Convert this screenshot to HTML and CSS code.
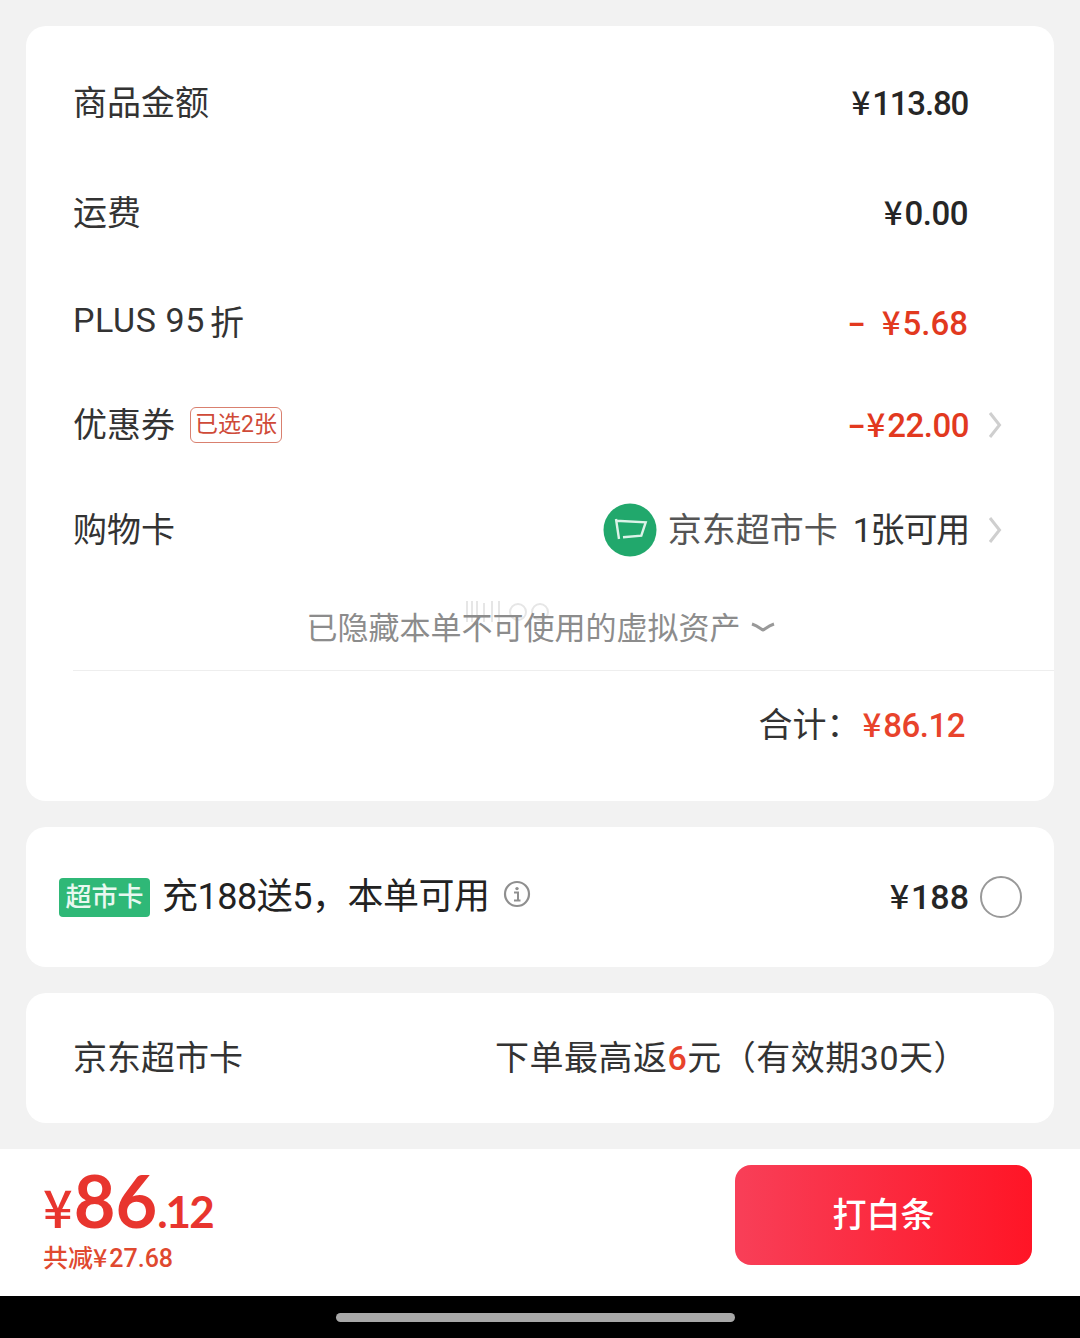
FILE: index.html
```html
<!DOCTYPE html>
<html>
<head>
<meta http-equiv="Content-Type" content="text/html; charset=utf-8"/>
<title>结算</title>
<link rel="stylesheet" href="styles.css">
</head>
<body>
<div class="content">
  <div class="card summary">
    <div class="row">
      <span class="label">商品金额</span>
      <span class="amount tight"><span class="yen">¥</span>113.80</span>
    </div>
    <div class="row">
      <span class="label">运费</span>
      <span class="amount"><span class="yen">¥</span>0.00</span>
    </div>
    <div class="row">
      <span class="label"><span class="latin">PLUS 95</span>折</span>
      <span class="amount red wide"><span class="minus minus-gap">-</span><span class="yen">¥</span>5.68</span>
    </div>
    <div class="row row-link row-coupon">
      <span class="label">优惠券<span class="tag">已选2张</span></span>
      <span class="amount red"><span class="minus">-</span><span class="yen">¥</span>22.00</span>
      <svg class="chev" width="14" height="26" viewBox="0 0 14 26"><path d="M2 1 L11.5 13 L2 25" fill="none" stroke="#cfcfcf" stroke-width="3"/></svg>
    </div>
    <div class="row row-link row-shop">
      <span class="label">购物卡</span>
      <span class="shopcard">
        <svg class="shopicon" width="54" height="54" viewBox="0 0 54 54"><circle cx="27" cy="27" r="26.5" fill="#21a86c"/><path d="M13 16 L16 36 M13 17.7 L42.7 19.3 L38.3 32.7 L20 34.3" fill="none" stroke="#dcf3e8" stroke-width="2.4"/></svg>
        <span class="shopname">京东超市卡</span>
        <span class="shopcount">1张可用</span>
      </span>
      <svg class="chev" width="14" height="26" viewBox="0 0 14 26"><path d="M2 1 L11.5 13 L2 25" fill="none" stroke="#cfcfcf" stroke-width="3"/></svg>
    </div>
    <div class="hidden-line">
      <svg class="smudge" width="90" height="26" viewBox="0 0 90 26"><path d="M3 3 V24 M8 3 V24 M13 3 V24 M20 5 V24 M28 3 V24 M35 3 V24" fill="none" stroke="#e6e6e6" stroke-width="2"/><circle cx="54" cy="14" r="8" fill="none" stroke="#e6e6e6" stroke-width="2"/><circle cx="76" cy="14" r="8" fill="none" stroke="#e6e6e6" stroke-width="2"/></svg>
      <span class="hidden-text">已隐藏本单不可使用的虚拟资产</span>
      <svg class="down" width="24" height="12" viewBox="0 0 24 12"><path d="M1 3 C7 5 10 8 12 9 C14 8 17 5 23 3" fill="none" stroke="#999" stroke-width="3"/></svg>
    </div>
    <div class="total">
      <span class="total-label">合计：</span><span class="total-num"><span class="yen">¥</span>86.12</span>
    </div>
  </div>

  <div class="card recharge">
    <span class="green-tag">超市卡</span>
    <span class="recharge-text">充188送5，本单可用</span>
    <svg class="info" width="28" height="28" viewBox="0 0 28 28"><circle cx="14" cy="14" r="12" fill="none" stroke="#8f8f8f" stroke-width="2.2"/><circle cx="14" cy="8.6" r="1.7" fill="#8f8f8f"/><path d="M11 12.5 H15 V20 M11 20.5 H17.5" fill="none" stroke="#8f8f8f" stroke-width="2"/></svg>
    <span class="recharge-price"><span class="yen">¥</span>188</span>
    <span class="radio"></span>
  </div>

  <div class="card jdcard">
    <span class="label">京东超市卡</span>
    <span class="jdcard-note">下单最高返<b>6</b>元（有效期30天）</span>
  </div>
</div>

<div class="paybar">
  <div class="pay-left">
    <div class="pay-total"><span class="pay-yen">¥</span><span class="pay-int">86</span><span class="pay-dec">.12</span></div>
    <div class="pay-save">共减<span class="yen">¥</span>27.68</div>
  </div>
  <div class="pay-btn">打白条</div>
</div>

<div class="navbar"><span class="home-pill"></span></div>
</body>
</html>
```

FILE: styles.css
```css
* {
  box-sizing: border-box;
}

html, body {
  margin: 0;
  padding: 0;
}

body {
  width: 1080px;
  height: 1338px;
  overflow: hidden;
  background-color: #f2f2f2;
  font-family: "Roboto", "Noto Sans CJK SC", sans-serif;
  color: #262626;
  display: flex;
  flex-direction: column;
}

.content {
  height: 1149px;
  flex: none;
  padding: 26px 26px 0;
  display: flex;
  flex-direction: column;
  gap: 26px;
}

.card {
  background-color: #fff;
  border-radius: 20px;
  flex: none;
}

.summary {
  height: 775px;
  padding: 22px 0 0 47px;
  display: flex;
  flex-direction: column;
}

.row {
  height: 110px;
  flex: none;
  display: flex;
  align-items: center;
  justify-content: space-between;
  padding-right: 86px;
}

.row-link {
  justify-content: flex-start;
  padding-right: 52px;
}

.row-link .label {
  margin-right: auto;
}

.row-coupon {
  height: 94px;
}

.row-shop {
  height: 116px;
}

.label {
  font-size: 34px;
  color: #333;
  display: flex;
  align-items: center;
  margin-bottom: 6px;
}

.latin {
  letter-spacing: 0.6px;
  margin-right: 5px;
}

.amount {
  font-size: 33px;
  font-weight: 500;
  letter-spacing: -0.5px;
  margin-bottom: 4px;
}

.tight {
  letter-spacing: -1.2px;
}

.wide {
  letter-spacing: 0;
}

.yen {
  font-family: "Noto Sans CJK SC", sans-serif;
  letter-spacing: 0;
  margin-right: 2px;
}

.red {
  color: #e2391f;
}

.minus {
  display: inline-block;
  transform: scaleX(1.6);
  margin-right: 5px;
}

.minus-gap {
  margin-right: 20px;
}

.tag {
  margin: 6px 0 0 15px;
  height: 36px;
  padding: 0 4px;
  border: 1px solid #d9806f;
  border-radius: 6px;
  color: #cf4a38;
  font-size: 23px;
  line-height: 33px;
}

.chev {
  margin-left: 19px;
}

.shopcard {
  display: flex;
  align-items: center;
  font-size: 34px;
}

.shopicon {
  margin-right: 11px;
}

.shopname {
  color: #555;
  margin-right: 15px;
  margin-bottom: 6px;
}

.shopcount {
  color: #333;
  letter-spacing: -1.2px;
  margin-bottom: 6px;
}

.hidden-line {
  position: relative;
  height: 82px;
  flex: none;
  padding: 0 46px 4px 0;
  display: flex;
  align-items: center;
  justify-content: center;
  font-size: 31px;
  color: #8c8c8c;
}

.hidden-text {
  position: relative;
  margin-bottom: 4px;
}

.smudge {
  position: absolute;
  left: 391px;
  top: 10px;
}

.down {
  margin-left: 10px;
}

.total {
  border-top: 1px solid #eee;
  flex: 1;
  padding: 0 89px 22px 0;
  display: flex;
  align-items: center;
  justify-content: flex-end;
}

.total-label {
  font-size: 34px;
  color: #333;
  margin-right: 2px;
  margin-bottom: 6px;
}

.total-num {
  font-size: 33px;
  font-weight: 500;
  letter-spacing: -0.5px;
  color: #e8432c;
  margin-bottom: 4px;
}

.recharge {
  height: 140px;
  padding: 0 32px 0 33px;
  display: flex;
  align-items: center;
}

.green-tag {
  width: 91px;
  height: 39px;
  border-radius: 4px;
  background-color: #2fb877;
  color: #e8f8f0;
  font-size: 26px;
  font-weight: 500;
  line-height: 38px;
  text-align: center;
  margin-right: 12px;
}

.recharge-text {
  font-size: 36px;
  color: #222;
  letter-spacing: -0.5px;
  margin-right: 14px;
  margin-bottom: 8px;
  white-space: nowrap;
}

.info {
  margin-bottom: 6px;
}

.recharge-price {
  margin-left: auto;
  margin-right: 11px;
  font-size: 34px;
  font-weight: 500;
  margin-bottom: 6px;
}

.radio {
  width: 42px;
  height: 42px;
  border: 2px solid #999;
  border-radius: 50%;
}

.jdcard {
  height: 130px;
  padding: 0 0 0 47px;
  display: flex;
  align-items: center;
}

.jdcard-note {
  margin-left: 252px;
  font-size: 34px;
  letter-spacing: 0.5px;
  color: #333;
  margin-bottom: 6px;
}

.jdcard-note b {
  color: #e8432c;
  font-weight: 500;
}

.paybar {
  height: 147px;
  flex: none;
  background-color: #fff;
  padding: 16px 48px 0 43px;
  display: flex;
  justify-content: space-between;
  align-items: flex-start;
}

.pay-total {
  color: #e8352e;
  height: 60px;
  line-height: 60px;
  margin-top: 5px;
  display: flex;
  align-items: baseline;
  font-family: "Lato", "Roboto", sans-serif;
  font-weight: 700;
}

.pay-yen {
  font-family: "Noto Sans CJK SC", sans-serif;
  font-size: 52px;
  font-weight: 500;
  margin-right: 1px;
}

.pay-int {
  font-size: 72px;
}

.pay-dec {
  font-size: 44px;
  letter-spacing: -2px;
}

.pay-save {
  margin-top: 8px;
  color: #e0492f;
  font-size: 25px;
  font-weight: 500;
  line-height: 36px;
  white-space: nowrap;
}

.pay-btn {
  width: 297px;
  height: 100px;
  border-radius: 16px;
  background: linear-gradient(90deg, #f83f58, #ff1526);
  color: #fff;
  font-size: 34px;
  font-weight: 500;
  line-height: 100px;
  text-align: center;
}

.navbar {
  height: 42px;
  flex: none;
  background-color: #000;
  display: flex;
  justify-content: center;
  padding: 17px 10px 0 0;
}

.home-pill {
  width: 399px;
  height: 9px;
  border-radius: 5px;
  background-color: #a8a8a8;
}
```
